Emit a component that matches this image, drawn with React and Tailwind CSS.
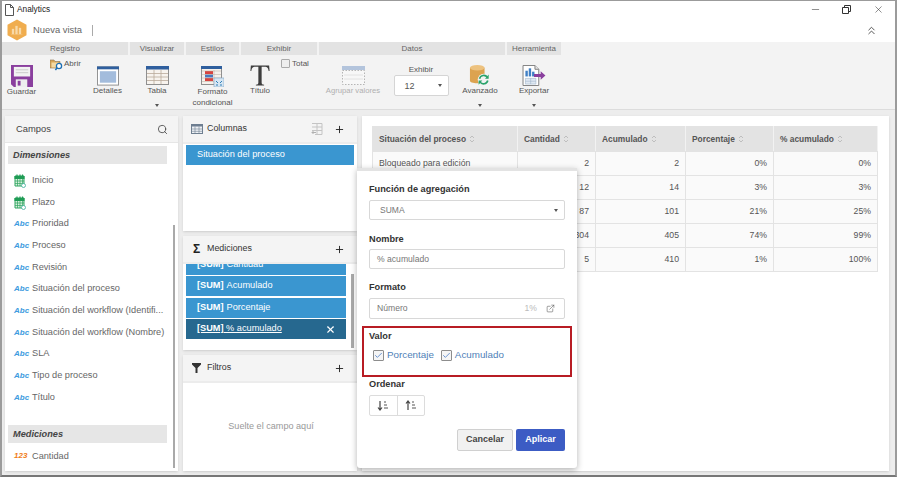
import React from 'react';
import { Search, Plus, X, ChevronsUp, Minus, ExternalLink, Check } from 'lucide-react';

const font = { fontFamily: '"Liberation Sans", Arial, sans-serif' };

const RibbonGroup = ({ title, width, children }) => (
  <div className={`flex flex-col shrink-0 ${width}`}>
    <div className="h-[13px] bg-[#e3e3e3] text-center text-[8px] leading-[13px] text-[#666]">{title}</div>
    <div className="flex-1 flex bg-[#f3f3f3]">{children}</div>
  </div>
);

const Caret = () => (
  <span className="block w-0 h-0 border-x-[2.5px] border-x-transparent border-t-[3px] border-t-[#555]"></span>
);

const SortIcon = () => (
  <svg width="6" height="8" viewBox="0 0 6 8" className="inline-block ml-[3px] shrink-0">
    <path d="M1 3 L3 1 L5 3 M1 5 L3 7 L5 5" fill="none" stroke="#b5b5b5" strokeWidth="0.8" />
  </svg>
);

const SaveIcon = () => (
  <svg width="22" height="22" viewBox="0 0 23 23">
    <path d="M0 0H23V23H3L0 20Z" fill="#8a3f9e" />
    <rect x="3" y="2" width="17" height="10" fill="#f2f2f2" />
    <path d="M5 5H18M5 8H18" stroke="#c9c9c9" />
    <rect x="5" y="15" width="12" height="8" fill="#eee" />
    <rect x="7" y="16.5" width="3" height="5" fill="#8a3f9e" />
  </svg>
);

const OpenIcon = () => (
  <svg width="13" height="12" viewBox="0 0 13 12" className="shrink-0">
    <path d="M0 1H4L5 2.5H10V9H0Z" fill="#d9a656" stroke="#8a7350" strokeWidth="0.6" />
    <rect x="1.5" y="3.5" width="7" height="5" fill="#f3d9a3" />
    <circle cx="9" cy="7" r="2.6" fill="#fff" stroke="#1c6fb4" strokeWidth="1.3" />
    <path d="M7 9L5.4 11" stroke="#1c6fb4" strokeWidth="1.5" />
  </svg>
);

const DetailsIcon = () => (
  <svg width="22" height="20" viewBox="0 0 23 20">
    <rect x="0.5" y="0.5" width="22" height="19" fill="#fff" stroke="#8f8f8f" />
    <rect x="0" y="0" width="23" height="3" fill="#2f5f9e" />
    <rect x="3" y="5" width="17" height="12" fill="#a3bcdc" />
  </svg>
);

const TableIcon = () => (
  <svg width="23" height="19" viewBox="0 0 23 19">
    <rect x="0.5" y="0.5" width="22" height="18" fill="#f7f3ee" stroke="#8f8f8f" />
    <rect x="0" y="0" width="23" height="3.5" fill="#2f5f9e" />
    <path d="M1 7.5H22M1 11H22M1 14.500H22M8 4V18M15 4V18" stroke="#b9a99a" strokeWidth="0.8" />
  </svg>
);

const ConditionalIcon = () => (
  <svg width="23" height="21" viewBox="0 0 23 21">
    <rect x="0.500" y="0.500" width="20" height="18" fill="#f5f1ec" stroke="#8f8f8f" />
    <rect x="0" y="0" width="21" height="3" fill="#2f5f9e" />
    <rect x="4" y="5" width="8" height="3" fill="#d8433f" />
    <rect x="4" y="8.500" width="8" height="3" fill="#4a78bf" />
    <rect x="4" y="12" width="8" height="3" fill="#d8433f" />
    <path d="M1 5H20M1 8.500H20M1 12H20M1 15.500H20M13 4V18" stroke="#b9a99a" strokeWidth="0.5" />
    <rect x="13" y="12" width="10" height="9" fill="#d6e6f3" stroke="#7fa3c4" strokeWidth="0.6" />
    <path d="M15 15L17 17M21 15L19 17M15 19H17M19 19H21" stroke="#2f7fb8" strokeWidth="1" />
  </svg>
);

const TitleIcon = () => (
  <svg width="20" height="21" viewBox="0 0 21 23">
    <path d="M0.500 0.500H20.500L21 6.500H20C19.500 3 18.500 1.800 15.500 1.800H12.300V19.500C12.300 21 13 21.500 15 21.700V22.500H6V21.700C8 21.500 8.700 21 8.700 19.500V1.800H5.500C2.500 1.800 1.500 3 1 6.500H0Z" fill="#3d3d3d" />
  </svg>
);

const GroupIcon = () => (
  <svg width="23" height="19" viewBox="0 0 23 19">
    <rect x="0" y="0" width="23" height="4" fill="#b3c4dc" />
    <rect x="0.500" y="4.500" width="22" height="14" fill="#f7f7f7" stroke="#b5b5b5" strokeDasharray="1.500 1.500" />
    <path d="M2 9H21M2 13H21" stroke="#e2e2e2" />
  </svg>
);

const DatabaseIcon = () => (
  <svg width="22" height="21" viewBox="0 0 22 23">
    <path d="M0 3V17C0 19 3 20 8 20C13 20 16 19 16 17V3Z" fill="#dca350" />
    <ellipse cx="8" cy="3" rx="8" ry="3" fill="#edc27f" />
    <circle cx="15" cy="16" r="6.500" fill="#f3f3f3" />
    <path d="M10.500 15A4.700 4.700 0 0 1 19 13.500M19.500 17A4.700 4.700 0 0 1 11 18.500" fill="none" stroke="#2ba36b" strokeWidth="1.800" />
    <path d="M20.500 10.500V15H16.500Z M9.500 21.500V17H13.500Z" fill="#2ba36b" />
  </svg>
);

const ExportIcon = () => (
  <svg width="24" height="21" viewBox="0 0 24 22">
    <path d="M0.500 0.500H13L17 4.500V21.500H0.500Z" fill="#fff" stroke="#7d7d7d" />
    <path d="M13 0.500V4.500H17" fill="#e5e5e5" stroke="#7d7d7d" />
    <rect x="3" y="6" width="2.500" height="6" fill="#3f7fc4" />
    <rect x="6.500" y="3.500" width="2.500" height="8.500" fill="#3f7fc4" />
    <rect x="10" y="7" width="2.500" height="5" fill="#3f7fc4" />
    <path d="M3 14H14V20H3ZM3 17H14M8.500 14V20" fill="#dfe8f2" stroke="#9fb3c8" strokeWidth="0.600" />
    <path d="M12 9.500H19V6.500L24 11L19 15.500V12.500H12Z" fill="#8a3f9e" />
  </svg>
);

const CalendarIcon = () => (
  <svg width="12" height="14" viewBox="0 0 12 14" className="shrink-0">
    <path d="M1 2H10V12H1Z" fill="#d8f0dd" stroke="#2fa560" />
    <rect x="0.500" y="2" width="10" height="3" fill="#1f9c55" />
    <path d="M3 0.500V3M6 0.500V3M8.500 0.500V3" stroke="#1f9c55" strokeWidth="1.200" />
    <path d="M1 7H10M1 9.500H10M3.500 5V12M6 5V12M8.500 5V12" stroke="#2fa560" strokeWidth="0.700" />
    <circle cx="9.500" cy="11.500" r="2" fill="#fff" stroke="#3fae9c" strokeWidth="0.800" />
  </svg>
);

const SortButtonIcon = ({ up }) => (
  <svg width="12" height="11" viewBox="0 0 12 11">
    <path d={up ? 'M3 10V1M1 3.500L3 1L5 3.500' : 'M3 1V10M1 7.500L3 10L5 7.500'} fill="none" stroke="#444" strokeWidth="1.200" />
    <path d="M7 2H9M7 5H10M7 8H11" stroke="#555" strokeWidth="1" />
  </svg>
);

const FieldIcon = ({ type }) => {
  if (type === 'date') return <span className="w-[12px] mr-[6px] flex justify-center shrink-0"><CalendarIcon /></span>;
  if (type === 'num') return <span className="w-[12px] mr-[6px] text-[8px] font-bold italic text-[#f07d1a] shrink-0">123</span>;
  return <span className="w-[12px] mr-[6px] text-[8px] font-bold italic text-[#3d9be0] shrink-0">Abc</span>;
};

const Field = ({ type, children }) => (
  <div className="h-[21.700px] flex items-center pl-[9px] text-[9.200px] text-[#666] whitespace-nowrap">
    <FieldIcon type={type} />
    <span>{children}</span>
  </div>
);

const SectionBar = ({ children }) => (
  <div className="mx-[3px] h-[18px] w-[159px] bg-[#e6e6e6] pl-[5px] text-[9.200px] leading-[18px] font-bold italic text-[#444]">
    {children}
  </div>
);

const PanelHeader = ({ icon, title, children }) => (
  <div className="h-[28px] shrink-0 flex items-center bg-[#f4f4f4] border-b-2 border-[#ececec] pl-[5px] pr-[12px]">
    <span className="w-[17px] flex justify-center mr-[2px]">{icon}</span>
    <span className="text-[8.900px] text-[#333]">{title}</span>
    <span className="flex-1"></span>
    {children}
  </div>
);

const Pill = ({ active, children }) => (
  <div className={`h-[20px] shrink-0 flex items-center pl-[11px] pr-[10px] text-[9.200px] text-white ${active ? 'bg-[#26688f]' : 'bg-[#3a96d0]'}`}>
    {children}
  </div>
);

const Label = ({ children, className = '' }) => (
  <div className={`text-[9.200px] leading-[13px] font-bold text-[#333] ${className}`}>{children}</div>
);

const Box = ({ h, children }) => (
  <div className={`mx-[12px] flex items-center border border-[#d8d8d8] rounded-[2px] bg-white pl-[7px] pr-[9px] text-[8.600px] text-[#777] ${h}`}>
    {children}
  </div>
);

const CheckItem = ({ children }) => (
  <label className="flex items-center text-[9.800px] leading-[14px] text-[#4f7fb8]">
    <span className="w-[11px] h-[11px] mr-[3px] flex items-center justify-center border border-[#8d8d8d] rounded-[1px] bg-[#f5f5f5]">
      <Check size={9} strokeWidth={2} className="text-[#3f74c4]" />
    </span>
    {children}
  </label>
);

const rows = [
  ['Bloqueado para edición', '2', '2', '0%', '0%'],
  ['', '12', '14', '3%', '3%'],
  ['', '87', '101', '21%', '25%'],
  ['', '304', '405', '74%', '99%'],
  ['', '5', '410', '1%', '100%'],
];

const heads = ['Situación del proceso', 'Cantidad', 'Acumulado', 'Porcentaje', '% acumulado'];

export default function App() {
  return (
    <div style={font} className="relative w-[897px] h-[477px] overflow-hidden flex flex-col bg-[#ededed] border-x-2 border-t border-[#9b9b9b] border-b-2 border-b-[#777]">
      {/* Title bar */}
      <div className="h-[17px] shrink-0 flex items-center bg-white pl-[3px] pr-[11px]">
        <svg width="9" height="12" viewBox="0 0 9 12" className="mr-[3px]">
          <path d="M0.500 0.500H5.500L8.500 3.500V11.500H0.500Z M5.500 0.500V3.500H8.500" fill="#fff" stroke="#555" />
        </svg>
        <span className="text-[8.300px] text-[#222]">Analytics</span>
        <span className="flex-1"></span>
        <Minus size={11} strokeWidth={1.200} className="text-[#333] mr-[21px]" />
        <svg width="9" height="9" viewBox="0 0 9 9" className="mr-[22px]">
          <path d="M0.500 2.500H6.500V8.500H0.500Z M2.500 2.500V0.500H8.500V6.500H6.500" fill="none" stroke="#333" />
        </svg>
        <X size={11} strokeWidth={1.200} className="text-[#333]" />
      </div>

      {/* Header */}
      <div className="h-[24px] shrink-0 flex items-center bg-white pl-[5px] pr-[17px]">
        <svg width="20" height="22" viewBox="0 0 20 22">
          <path d="M10 0.500L19.500 5.700V16.300L10 21.500L0.500 16.300V5.700Z" fill="#f0ad4e" />
          <path d="M5 15V10H7V15ZM8.500 15V7H10.500V15ZM12 15V9H14V15ZM4 15.500H15.500" fill="#f8d9a8" stroke="#f8d9a8" strokeWidth="0.300" />
        </svg>
        <span className="ml-[6px] text-[9.400px] text-[#666]">Nueva vista</span>
        <span className="ml-[10px] w-px h-[11px] bg-[#aaa]"></span>
        <span className="flex-1"></span>
        <ChevronsUp size={13} strokeWidth={1.500} className="text-[#333]" />
      </div>

      {/* Ribbon */}
      <div className="h-[68px] shrink-0 flex gap-[2px] bg-[#f3f3f3] border-b border-[#dcdcdc] text-[8px] leading-[10px] text-[#555]">
        <RibbonGroup title="Registro" width="w-[126px]">
          <div className="w-[39px] flex flex-col items-center pt-[10px]">
            <SaveIcon />
            <span>Guardar</span>
          </div>
          <div className="w-[47px] pt-[4px] pl-[9px] flex items-start gap-[1px]">
            <OpenIcon />
            <span>Abrir</span>
          </div>
          <div className="w-[39px] flex flex-col items-center pt-[11px]">
            <DetailsIcon />
            <span>Detalles</span>
          </div>
        </RibbonGroup>
        <RibbonGroup title="Visualizar" width="w-[54px]">
          <div className="w-full flex flex-col items-center pt-[11px]">
            <TableIcon />
            <span className="mt-[1px]">Tabla</span>
            <span className="mt-[8px]"><Caret /></span>
          </div>
        </RibbonGroup>
        <RibbonGroup title="Estilos" width="w-[53px]">
          <div className="w-full flex flex-col items-center pt-[11px] text-center">
            <ConditionalIcon />
            <span className="mt-[-1px] leading-[11px]">Formato</span>
            <span className="leading-[11px]">condicional</span>
          </div>
        </RibbonGroup>
        <RibbonGroup title="Exhibir" width="w-[76px]">
          <div className="w-[38px] flex flex-col items-center pt-[10px]">
            <TitleIcon />
            <span>Título</span>
          </div>
          <div className="flex items-start pt-[3px] pl-[2px]">
            <span className="w-[9px] h-[9px] mt-[1px] mr-[2px] border border-[#aaa] rounded-[1px] bg-[#eee] shrink-0"></span>
            <span className="leading-[11px]">Total</span>
          </div>
        </RibbonGroup>
        <RibbonGroup title="Datos" width="w-[186px]">
          <div className="w-[68px] flex flex-col items-center pt-[11px] text-[#b0b0b0] text-[7.700px]">
            <GroupIcon />
            <span className="mt-[1px]">Agrupar valores</span>
          </div>
          <div className="w-[68px] flex flex-col items-center pt-[10px]">
            <span>Exhibir</span>
            <div className="w-[55px] h-[21px] flex items-center justify-between border border-[#d5d5d5] rounded-[2px] bg-white pl-[10px] pr-[6px] text-[9px] text-[#555]">
              12
              <Caret />
            </div>
          </div>
          <div className="w-[50px] flex flex-col items-center pt-[10px]">
            <DatabaseIcon />
            <span>Avanzado</span>
            <span className="mt-[8px]"><Caret /></span>
          </div>
        </RibbonGroup>
        <RibbonGroup title="Herramienta" width="w-[54px]">
          <div className="w-full flex flex-col items-center pt-[10px]">
            <ExportIcon />
            <span>Exportar</span>
            <span className="mt-[8px]"><Caret /></span>
          </div>
        </RibbonGroup>
        <div className="flex-1 bg-[#f3f3f3]"></div>
      </div>

      {/* Content */}
      <div className="flex-1 min-h-0 flex gap-[5px] pt-[6px] pb-[4px] pl-[3px] pr-[6px]">
        {/* Campos */}
        <div className="relative w-[173px] shrink-0 flex flex-col bg-white shadow-sm overflow-hidden">
          <div className="h-[27px] shrink-0 flex items-center justify-between bg-[#f4f4f4] border-b border-[#e6e6e6] pl-[11px] pr-[10px]">
            <span className="text-[9.400px] text-[#444]">Campos</span>
            <Search size={11} strokeWidth={1.800} className="text-[#444]" />
          </div>
          <div className="pt-[3px]">
            <SectionBar>Dimensiones</SectionBar>
            <div className="pt-[6px]">
              <Field type="date">Inicio</Field>
              <Field type="date">Plazo</Field>
              <Field>Prioridad</Field>
              <Field>Proceso</Field>
              <Field>Revisión</Field>
              <Field>Situación del proceso</Field>
              <Field>Situación del workflow (Identifi...</Field>
              <Field>Situación del workflow (Nombre)</Field>
              <Field>SLA</Field>
              <Field>Tipo de proceso</Field>
              <Field>Título</Field>
            </div>
            <div className="h-[16px]"></div>
            <SectionBar>Mediciones</SectionBar>
            <div className="pt-[3px]">
              <Field type="num">Cantidad</Field>
            </div>
          </div>
          <div className="absolute right-[3px] bottom-[3px] w-[2px] h-[243px] bg-[#a9a9a9]"></div>
        </div>

        {/* Columnas / Mediciones / Filtros */}
        <div className="w-[174px] shrink-0 flex flex-col gap-[5px]">
          <div className="h-[115px] shrink-0 flex flex-col bg-white shadow-sm">
            <PanelHeader
              title="Columnas"
              icon={
                <svg width="12" height="10" viewBox="0 0 12 10">
                  <rect x="0.500" y="0.500" width="11" height="9" fill="#eef1f5" stroke="#6f7f91" />
                  <rect x="0.500" y="0.500" width="11" height="2" fill="#6f7f91" />
                  <path d="M0.500 5H11.500M0.500 7.300H11.500M4 2.500V9.500M8 2.500V9.500" stroke="#6f7f91" strokeWidth="0.600" />
                </svg>
              }
            >
              <svg width="12" height="12" viewBox="0 0 12 12" className="mr-[11px]">
                <path d="M1 0.500H11V11.500H4M6 0.500V11.500M1 4H11M1 7.500H11" fill="none" stroke="#c4c4c4" />
                <path d="M5 9.500H1M2.500 8L1 9.500L2.500 11" fill="none" stroke="#b0b0b0" />
              </svg>
              <Plus size={11} strokeWidth={2} className="text-[#222]" />
            </PanelHeader>
            <div className="pt-[1px] px-[3px]">
              <Pill>Situación del proceso</Pill>
            </div>
          </div>

          <div className="relative h-[114px] shrink-0 flex flex-col bg-white shadow-sm overflow-hidden">
            <PanelHeader title="Mediciones" icon={<span className="text-[12px] leading-none font-bold text-[#222]">Σ</span>}>
              <Plus size={11} strokeWidth={2} className="text-[#222]" />
            </PanelHeader>
            <div className="flex-1 min-h-0 overflow-hidden pl-[3px] pr-[11px]">
              <div className="flex flex-col gap-[1.500px] mt-[-9.500px]">
                <Pill><b className="mr-[3px]">[SUM]</b> Cantidad</Pill>
                <Pill><b className="mr-[3px]">[SUM]</b> Acumulado</Pill>
                <Pill><b className="mr-[3px]">[SUM]</b> Porcentaje</Pill>
                <Pill active>
                  <span className="underline flex-1"><b>[SUM]</b> % acumulado</span>
                  <X size={11} strokeWidth={2.500} />
                </Pill>
              </div>
            </div>
            <div className="absolute right-[3px] bottom-[2px] w-[3px] h-[74px] bg-[#a9a9a9]"></div>
          </div>

          <div className="flex-1 flex flex-col bg-white shadow-sm">
            <PanelHeader
              title="Filtros"
              icon={
                <svg width="9" height="10" viewBox="0 0 9 10">
                  <path d="M0 0H9V1.500L5.500 5V10H3.500V5L0 1.500Z" fill="#333" />
                </svg>
              }
            >
              <Plus size={11} strokeWidth={2} className="text-[#222]" />
            </PanelHeader>
            <div className="flex-1 flex items-center justify-center pl-[2px] text-[9.100px] text-[#999]">
              Suelte el campo aquí
            </div>
          </div>
        </div>

        {/* Table panel */}
        <div className="flex-1 bg-white shadow-sm pt-[10px] pl-[10px] pr-[11px]">
          <table className="w-[505px] table-fixed border-collapse text-[8.700px] text-[#555]">
            <colgroup>
              <col className="w-[145px]" />
              <col className="w-[78px]" />
              <col className="w-[90px]" />
              <col className="w-[88px]" />
              <col className="w-[104px]" />
            </colgroup>
            <thead>
              <tr className="h-[25px] bg-[#e3e3e3]">
                {heads.map((h) => (
                  <th key={h} className="border border-[#e3e3e3] border-r-[#f2f2f2] pl-[6px] text-left text-[8.400px] font-bold text-[#555]">
                    {h}
                    <SortIcon />
                  </th>
                ))}
              </tr>
            </thead>
            <tbody>
              {rows.map((r, i) => (
                <tr key={i} className="h-[24px] bg-[#fafafa]">
                  {r.map((c, j) => (
                    <td key={j} className={`border border-[#e3e3e3] ${j === 0 ? 'pl-[6px] text-left' : 'pr-[6px] text-right'}`}>
                      {c}
                    </td>
                  ))}
                </tr>
              ))}
            </tbody>
          </table>
        </div>
      </div>

      {/* Popup */}
      <div className="absolute left-[355px] top-[167px] w-[220px] h-[300px] flex flex-col bg-white border-t-[3px] border-[#e3e3e3] rounded-b-[3px] shadow-[0_2px_6px_rgba(0,0,0,0.3)]">
        <Label className="mt-[12px] mx-[12px]">Función de agregación</Label>
        <div className="h-[20px] mt-[4px] mx-[12px] flex items-center justify-between border border-[#d8d8d8] rounded-[2px] bg-white pl-[10px] pr-[6px] text-[8.500px] text-[#777]">
          SUMA
          <Caret />
        </div>
        <Label className="mt-[13px] mx-[12px]">Nombre</Label>
        <div className="mt-[3px]"><Box h="h-[20px]">% acumulado</Box></div>
        <Label className="mt-[12px] mx-[12px]">Formato</Label>
        <div className="mt-[4px]">
          <Box h="h-[21px]">
            <span className="flex-1">Número</span>
            <span className="text-[#bbb] mr-[9px]">1%</span>
            <ExternalLink size={9} strokeWidth={1.500} className="text-[#555]" />
          </Box>
        </div>
        <div className="h-[51px] mt-[7px] mx-[5px] border-2 border-[#b81c24] pl-[5px] pt-[2px]">
          <Label>Valor</Label>
          <div className="flex gap-[7px] mt-[5px] pl-[4px]">
            <CheckItem>Porcentaje</CheckItem>
            <CheckItem>Acumulado</CheckItem>
          </div>
        </div>
        <Label className="mt-[1px] mx-[12px]">Ordenar</Label>
        <div className="mt-[4px] mx-[12px] w-[56px] h-[21px] flex border border-[#dcdcdc] rounded-[2px]">
          <span className="flex-1 flex items-center justify-center border-r border-[#dcdcdc]">
            <SortButtonIcon />
          </span>
          <span className="flex-1 flex items-center justify-center">
            <SortButtonIcon up />
          </span>
        </div>
        <div className="mt-[13px] mx-[12px] flex justify-end gap-[3px]">
          <button className="w-[56px] h-[22px] border border-[#d0d0d0] rounded-[2px] bg-[#f1f1f1] text-[9px] font-bold text-[#444]">Cancelar</button>
          <button className="w-[49px] h-[22px] rounded-[2px] bg-[#3c5cc4] text-[9px] font-bold text-white">Aplicar</button>
        </div>
      </div>
    </div>
  );
}
